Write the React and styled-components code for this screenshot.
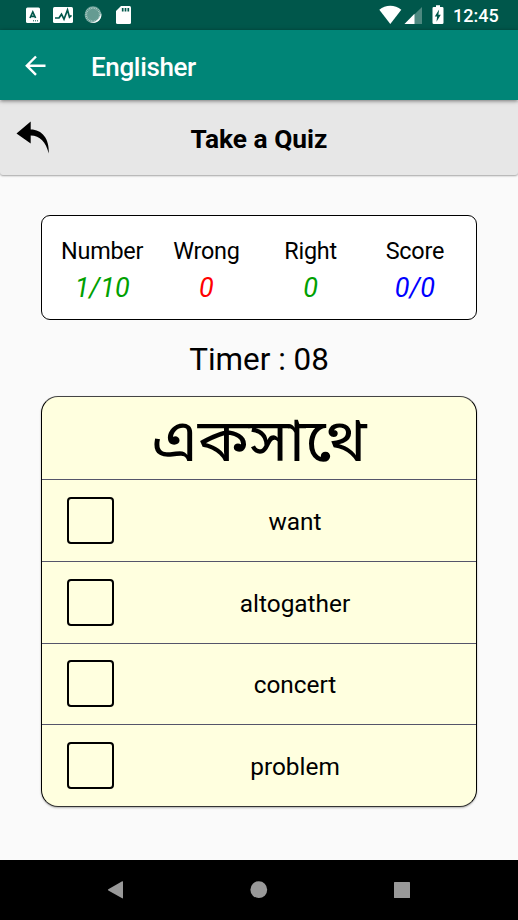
import React from "react";
import styled, { createGlobalStyle } from "styled-components";

const GlobalStyle = createGlobalStyle`
  * { box-sizing: border-box; }
  body { margin: 0; background: #fafafa; font-family: Roboto, "Noto Sans", sans-serif; color: #000; }
`;

const Screen = styled.div`
  width: 518px;
  height: 920px;
  display: flex;
  flex-direction: column;
  background: #fafafa;
  overflow: hidden;
`;

const StatusBar = styled.header`
  height: 30px;
  flex: none;
  display: flex;
  justify-content: space-between;
  background: #00574b;
`;

const Clock = styled.span`
  width: 65px;
  color: #fff;
  font-size: 18px;
  font-weight: 500;
  line-height: 32px;
`;

const StatusRight = styled.div`
  display: flex;
`;

const AppBar = styled.div`
  height: 70px;
  flex: none;
  display: flex;
  align-items: center;
  padding-left: 20px;
  background: #008577;
  box-shadow: 0 1px 4px rgba(0, 0, 0, 0.5);
  z-index: 2;
`;

const AppTitle = styled.h1`
  margin: 3px 0 0 40px;
  color: #fff;
  font-size: 26px;
  font-weight: 500;
  letter-spacing: -0.35px;
  line-height: 32px;
`;

const TitleBar = styled.div`
  height: 75px;
  flex: none;
  display: grid;
  grid-template-columns: 60px 1fr 60px;
  align-items: center;
  background: #e7e7e7;
  border-radius: 3px;
  box-shadow: 0 1px 2px rgba(0, 0, 0, 0.35);
`;

const PageTitle = styled.h2`
  margin: 3px 0 0;
  font-size: 26.3px;
  font-weight: 700;
  line-height: 32px;
  text-align: center;
`;

const Content = styled.main`
  flex: 1;
  padding: 40px 41px 0;
`;

const ScoreCard = styled.section`
  height: 105px;
  display: grid;
  grid-template-columns: repeat(4, 1fr);
  padding: 19px 9px 0 8px;
  background: #fff;
  border: 1.4px solid #000;
  border-radius: 9px;
`;

const Stat = styled.div`
  display: flex;
  flex-direction: column;
  align-items: center;
`;

const StatLabel = styled.span`
  font-size: 23.4px;
  letter-spacing: -0.25px;
  line-height: 32px;
`;

const StatValue = styled.span`
  margin-top: 4px;
  color: ${(p) => p.$color};
  font-size: 27px;
  font-style: italic;
  line-height: 34px;
`;

const Timer = styled.div`
  height: 76px;
  padding-top: 19px;
  font-size: 31.4px;
  line-height: 42px;
  text-align: center;
`;

const QuizCard = styled.section`
  height: 411px;
  display: grid;
  grid-template-rows: 82px repeat(4, 1fr);
  background: #ffffdf;
  border: 1px solid #000;
  border-top-color: #444;
  border-bottom-color: #333;
  border-radius: 17px;
  box-shadow: 0 1px 2px rgba(0, 0, 0, 0.3);
`;

const Question = styled.div`
  padding-top: 14px;
  font-family: "Noto Sans Bengali", "Noto Sans", sans-serif;
  font-size: 59px;
  line-height: 70px;
  text-align: center;
  white-space: nowrap;
  transform: scaleX(1.075);
`;

const Answer = styled.label`
  display: flex;
  align-items: center;
  padding-left: 25px;
  border-top: 1px solid #55556a;
`;

const Box = styled.input`
  appearance: none;
  width: 47px;
  height: 47px;
  flex: none;
  margin: 0;
  border: 2px solid #000;
  border-radius: 4px;
`;

const AnswerText = styled.span`
  flex: 1;
  padding-top: 2px;
  font-size: 24.4px;
  text-align: center;
`;

const NavBar = styled.nav`
  height: 60px;
  flex: none;
  background: #000;
`;

const Icon = styled.svg`
  display: block;
  flex: none;
`;

const stats = [
  ["Number", "1/10", "#00a000"],
  ["Wrong", "0", "#f00"],
  ["Right", "0", "#00a000"],
  ["Score", "0/0", "#00f"],
];

const answers = ["want", "altogather", "concert", "problem"];

const dots = Array.from({ length: 24 }, (_, i) => i * 15);

function NotificationIcons() {
  return (
    <Icon width="140" height="30" viewBox="0 0 140 30" fill="none">
      <rect x="26" y="7.5" width="14" height="15.5" rx="1.5" fill="#fff" />
      <path d="M30 18 32.8 12 35.6 18M31 16.3H34.6" stroke="#00574b" strokeWidth="1.7" />
      <path d="M33 20.8H39" stroke="#00574b" strokeDasharray="1 1" />
      <rect x="53" y="7" width="20" height="16" rx="1.5" fill="#fff" />
      <path d="M55 18H59L61.5 14.2 64 19.2 67.5 10 69.5 17.2 71.5 15.4" stroke="#00574b" strokeWidth="1.7" />
      <circle cx="93" cy="14.7" r="8.4" fill="#659b92" />
      {dots.map((a) => (
        <path key={a} d="M93 6.8V8.8" stroke="#b5d0cb" strokeWidth=".8" transform={`rotate(${a} 93 14.7)`} />
      ))}
      <path d="M101 12.5C102.8 18 98.5 24 90 22.7 96 22.6 100.5 18.5 101 12.5Z" fill="#fff" />
      <path d="M121 6H129.5Q131 6 131 7.5V22.5Q131 24 129.5 24H117.5Q116 24 116 22.5V11Z" fill="#fff" />
      <path d="M122.7 8V11.5M125.5 8V11.5M128.3 8V11.5" stroke="#00574b" strokeWidth="1.7" />
    </Icon>
  );
}

function SystemIcons() {
  return (
    <Icon width="74" height="30" viewBox="0 0 74 30">
      <path d="M.3 9.8C6.5 4.5 16 4.5 22.3 9.8L11.3 24Z" fill="#fff" />
      <path d="M43 7V24H25.5Z" fill="#4d8980" />
      <path d="M35.5 13.8V24H25.5Z" fill="#fff" />
      <path d="M57 5.3H61V7H63.2Q64.5 7 64.5 8.3V22.7Q64.5 24 63.2 24H54.8Q53.5 24 53.5 22.7V8.3Q53.5 7 54.8 7H57Z" fill="#fff" />
      <path d="M60.1 9.5 55.8 16.4H58.1L57.5 21.8 61.8 14.8H59.4Z" fill="#00574b" />
    </Icon>
  );
}

export default function App() {
  return (
    <>
      <GlobalStyle />
      <Screen>
        <StatusBar>
          <NotificationIcons />
          <StatusRight>
            <SystemIcons />
            <Clock>12:45</Clock>
          </StatusRight>
        </StatusBar>
        <AppBar>
          <Icon width="31" height="31" viewBox="0 0 31 31" fill="none" stroke="#fff" strokeWidth="2.4">
            <path d="M25.5 15.7H7M16 6.5 6.8 15.7 16 24.9" />
          </Icon>
          <AppTitle>Englisher</AppTitle>
        </AppBar>
        <TitleBar>
          <Icon width="60" height="75" viewBox="0 0 60 75">
            <path d="M16.5 33.5 30.7 21.5V29.5C42 29.5 49.5 38.5 48.8 53.5 45.8 42 40 35.5 30.7 35.5V43.5Z" />
          </Icon>
          <PageTitle>Take a Quiz</PageTitle>
        </TitleBar>
        <Content>
          <ScoreCard>
            {stats.map(([label, value, color]) => (
              <Stat key={label}>
                <StatLabel>{label}</StatLabel>
                <StatValue $color={color}>{value}</StatValue>
              </Stat>
            ))}
          </ScoreCard>
          <Timer>Timer : 08</Timer>
          <QuizCard>
            <Question lang="bn">একসাথে</Question>
            {answers.map((text) => (
              <Answer key={text}>
                <Box type="checkbox" />
                <AnswerText>{text}</AnswerText>
              </Answer>
            ))}
          </QuizCard>
        </Content>
        <NavBar>
          <Icon width="518" height="60" viewBox="0 0 518 60" fill="#999">
            <path d="M108.3 29.3 122.2 21.3Q123 21 123 22V37.8Q123 38.7 122.2 38.3L108.3 30.5Q107.5 29.9 108.3 29.3Z" />
            <circle cx="258.8" cy="29.7" r="8.4" />
            <rect x="394" y="22" width="16" height="16" rx="0.5" />
          </Icon>
        </NavBar>
      </Screen>
    </>
  );
}
